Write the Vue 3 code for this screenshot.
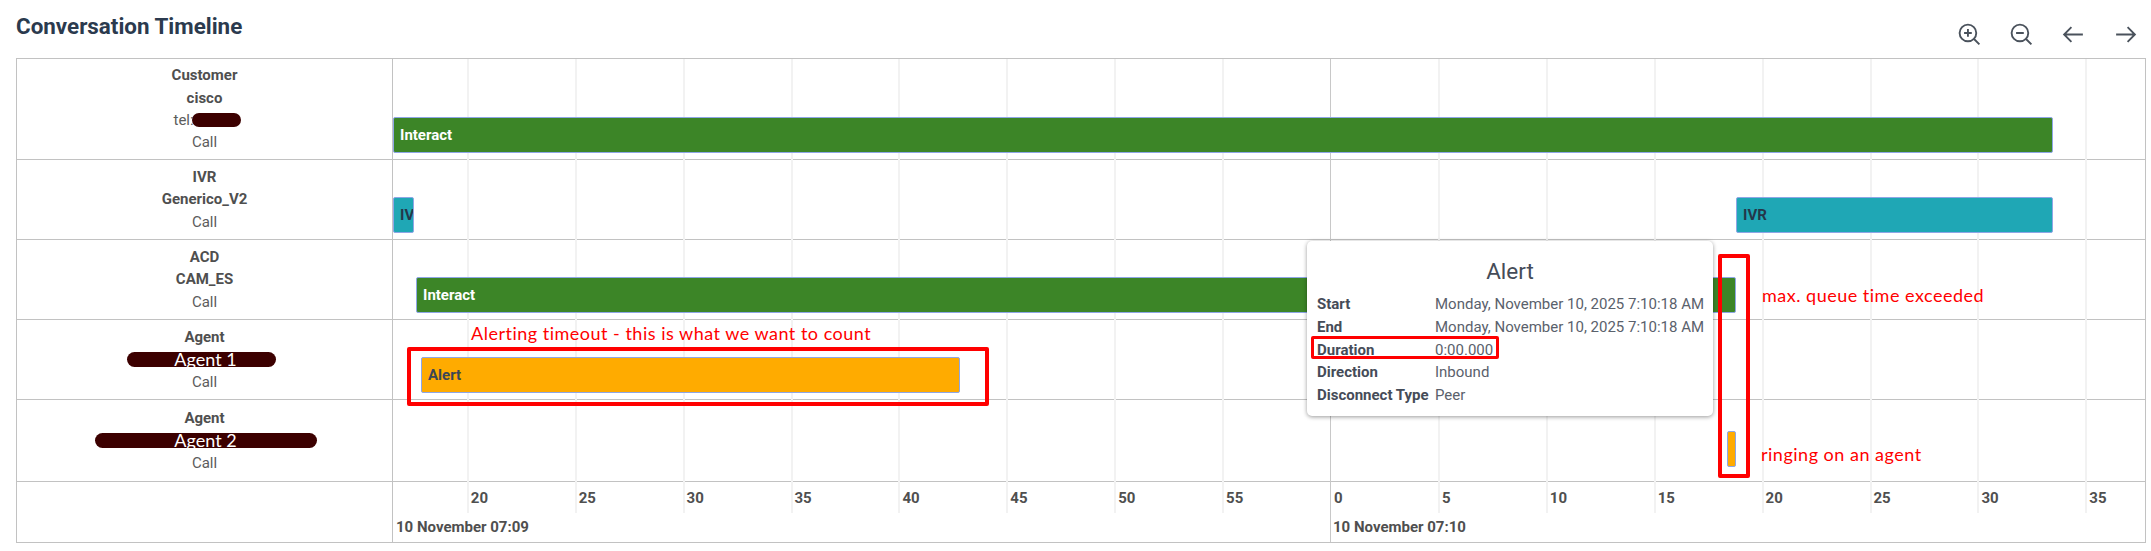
<script setup>
const rows = [
  { h: 101, lines: [['Customer', true], ['cisco', true], ['tel:', false, 'blob'], ['Call', false]], bars: [{ x: 393, w: 1660, top: 58, cls: 'green', text: 'Interact' }] },
  { h: 80, lines: [['IVR', true], ['Generico_V2', true], ['Call', false]], bars: [{ x: 393, w: 21, top: 37, cls: 'teal', text: 'IVR' }, { x: 1736, w: 317, top: 37, cls: 'teal', text: 'IVR' }] },
  { h: 80, lines: [['ACD', true], ['CAM_ES', true], ['Call', false]], bars: [{ x: 416, w: 1320, top: 37, cls: 'green', text: 'Interact' }] },
  { h: 80, lines: [['Agent', true], ['Agent 1', false, 'agent1'], ['Call', false]], bars: [{ x: 421, w: 539, top: 37, cls: 'orange', text: 'Alert' }] },
  { h: 82, lines: [['Agent', true], ['Agent 2', false, 'agent2'], ['Call', false]], bars: [{ x: 1727, w: 9, top: 31, cls: 'orange', text: '' }] },
]
const origin = 393
const step = 107.9
const zero = 1330
const ticks = []
for (let k = -8; k <= 7; k++) {
  const sec = ((k * 5) % 60 + 60) % 60
  ticks.push({ label: String(sec), x: zero + k * step - origin, major: k === 0 })
}
const details = [
  ['Start', 'Monday, November 10, 2025 7:10:18 AM'],
  ['End', 'Monday, November 10, 2025 7:10:18 AM'],
  ['Duration', '0:00.000'],
  ['Direction', 'Inbound'],
  ['Disconnect Type', 'Peer'],
]
</script>

<template>
  <div class="page">
    <header class="head">
      <h1>Conversation Timeline</h1>
      <div class="tools">
        <svg viewBox="0 0 24 24"><circle cx="10.5" cy="10.5" r="8" /><path d="M21.5 21.5l-5.4-5.4M10.5 6.8v7.4M6.8 10.5h7.4" /></svg>
        <svg viewBox="0 0 24 24"><circle cx="10.5" cy="10.5" r="8" /><path d="M21.5 21.5l-5.4-5.4M6.8 10.5h7.4" /></svg>
        <svg viewBox="0 0 24 24"><path d="M21 12H3.5M10 5l-7 7 7 7" /></svg>
        <svg viewBox="0 0 24 24"><path d="M3 12h17.5M14 5l7 7-7 7" /></svg>
      </div>
    </header>

    <section class="chart">
      <div class="grid-lines">
        <i v-for="t in ticks" :key="t.x" :class="{ major: t.major }" :style="{ left: t.x + 'px' }"></i>
      </div>
      <div v-for="(r, i) in rows" :key="i" class="row" :style="{ height: r.h + 'px' }">
        <div class="label">
          <div v-for="(l, j) in r.lines" :key="j" class="line" :class="[{ strong: l[1] }, l[2]]">
            <span v-if="l[2] === 'agent1' || l[2] === 'agent2'" class="mask"></span>
            <span class="ltext">{{ l[0] }}</span>
            <span v-if="l[2] === 'blob'" class="mask"></span>
          </div>
        </div>
        <div class="track">
          <div v-for="b in r.bars" :key="b.x" class="bar" :class="b.cls"
            :style="{ left: (b.x - origin) + 'px', width: b.w + 'px', top: b.top + 'px' }">{{ b.text }}</div>
        </div>
      </div>
      <div class="row axis">
        <div class="label"></div>
        <div class="track">
          <span v-for="t in ticks" :key="t.x" class="tick" :style="{ left: (t.x + 4) + 'px' }">{{ t.label }}</span>
          <span class="date" style="left: 3px">10 November 07:09</span>
          <span class="date" :style="{ left: (zero - origin + 3) + 'px' }">10 November 07:10</span>
        </div>
      </div>
    </section>

    <aside class="tip">
      <h2>Alert</h2>
      <dl>
        <template v-for="d in details" :key="d[0]">
          <dt>{{ d[0] }}</dt>
          <dd>{{ d[1] }}</dd>
        </template>
      </dl>
    </aside>

    <div class="box box-alert"></div>
    <div class="box box-queue"></div>
    <div class="box box-duration"></div>
    <span class="note note-a">Alerting timeout - this is what we want to count</span>
    <span class="note note-b">max. queue time exceeded</span>
    <span class="note note-c">ringing on an agent</span>
  </div>
</template>

<style scoped>
.page {
  position: relative;
  width: 2151px;
  height: 551px;
  overflow: hidden;
  background: #fff;
  font-family: Roboto, "Liberation Sans", sans-serif;
  color: #4f4f4f;
}
.head {
  display: flex;
  align-items: flex-start;
  justify-content: space-between;
  height: 58px;
  padding: 0 13px 0 16px;
  box-sizing: border-box;
}
h1 {
  margin: 13px 0 0;
  font-size: 22.4px;
  line-height: 26px;
  font-weight: 700;
  color: #2b3a4e;
}
.tools {
  display: flex;
  gap: 27px;
  margin-top: 22px;
}
.tools svg {
  width: 25px;
  height: 25px;
  fill: none;
  stroke: #4a525c;
  stroke-width: 1.8;
}
.chart {
  position: relative;
  margin-left: 16px;
  width: 2130px;
  box-sizing: border-box;
  border: 1px solid #c2c2c2;
}
.grid-lines {
  position: absolute;
  left: 376px;
  top: 0;
  bottom: 29px;
  right: 0;
}
.grid-lines i {
  position: absolute;
  top: 0;
  bottom: 0;
  width: 2px;
  background: #f2f2f2;
}
.grid-lines i.major {
  bottom: -29px;
  width: 1px;
  background: #c8c8c8;
}
.row {
  display: grid;
  grid-template-columns: 376px 1fr;
  box-sizing: border-box;
  border-bottom: 1px solid #c2c2c2;
}
.axis {
  height: 60px;
  border-bottom: 0;
}
.label {
  display: flex;
  flex-direction: column;
  justify-content: center;
  align-items: center;
  border-right: 1px solid #c2c2c2;
  font-size: 15px;
  line-height: 22.3px;
  color: #5c5c5c;
}
.line {
  position: relative;
  white-space: nowrap;
}
.strong {
  font-weight: 700;
  color: #4f4f4f;
}
.ltext {
  position: relative;
}
.mask {
  position: absolute;
  background: #3c0000;
  border-radius: 8px;
}
.blob .ltext {
  display: inline-block;
  width: 62px;
}
.blob .mask {
  left: 18px;
  top: 4px;
  width: 49px;
  height: 14px;
}
.agent1 .ltext,
.agent2 .ltext {
  display: block;
  margin-left: 2px;
  font-family: Lato, sans-serif;
  font-size: 18px;
  color: #fff;
}
.agent1 .mask {
  left: calc(50% - 78px);
  top: 4px;
  width: 149px;
  height: 15px;
}
.agent2 .mask {
  left: calc(50% - 110px);
  top: 4px;
  width: 222px;
  height: 15px;
}
.track {
  position: relative;
}
.bar {
  position: absolute;
  height: 36px;
  box-sizing: border-box;
  border: 1px solid #8ea6e6;
  border-radius: 2px;
  padding-left: 6px;
  overflow: hidden;
  white-space: nowrap;
  font-size: 15px;
  font-weight: 700;
  line-height: 34px;
}
.green {
  background: #3c8527;
  color: #fff;
}
.teal {
  background: #1fa7b5;
  color: #24364a;
}
.orange {
  background: #ffab00;
  color: #3c4656;
}
.tick,
.date {
  position: absolute;
  font-weight: 700;
  font-size: 15px;
  line-height: 18px;
  color: #4f4f4f;
  white-space: nowrap;
}
.tick {
  top: 7px;
}
.date {
  top: 36px;
}
.tip {
  position: absolute;
  left: 1307px;
  top: 241px;
  width: 406px;
  height: 175px;
  box-sizing: border-box;
  padding: 17px 10px 0;
  background: #fff;
  border-radius: 5px;
  box-shadow: 0 1px 4px rgba(0, 0, 0, 0.4);
  color: #454c58;
}
.tip h2 {
  margin: 0;
  font-size: 22.5px;
  line-height: 26px;
  font-weight: 400;
  text-align: center;
}
.tip dl {
  display: grid;
  grid-template-columns: 118px 1fr;
  grid-auto-rows: 22.7px;
  align-items: center;
  margin: 9px 0 0;
  font-size: 15px;
}
.tip dt {
  font-weight: 700;
  white-space: nowrap;
}
.tip dd {
  margin: 0;
  font-weight: 400;
  color: #5a616c;
  white-space: nowrap;
}
.box {
  position: absolute;
  box-sizing: border-box;
  border: 4px solid #ff0000;
  border-radius: 2px;
}
.box-alert {
  left: 407px;
  top: 347px;
  width: 582px;
  height: 59px;
}
.box-queue {
  left: 1718px;
  top: 254px;
  width: 32px;
  height: 224px;
}
.box-duration {
  left: 1311px;
  top: 336px;
  width: 188px;
  height: 23px;
  border-width: 3px;
}
.note {
  position: absolute;
  font-family: Lato, sans-serif;
  font-size: 18px;
  font-weight: 400;
  letter-spacing: 0.5px;
  line-height: 20px;
  color: #ff0000;
  white-space: nowrap;
}
.note-a {
  left: 471px;
  top: 323px;
}
.note-b {
  left: 1762px;
  top: 285px;
}
.note-c {
  left: 1761px;
  top: 444px;
}
</style>

<style>
html, body { background: #fff; }
</style>
